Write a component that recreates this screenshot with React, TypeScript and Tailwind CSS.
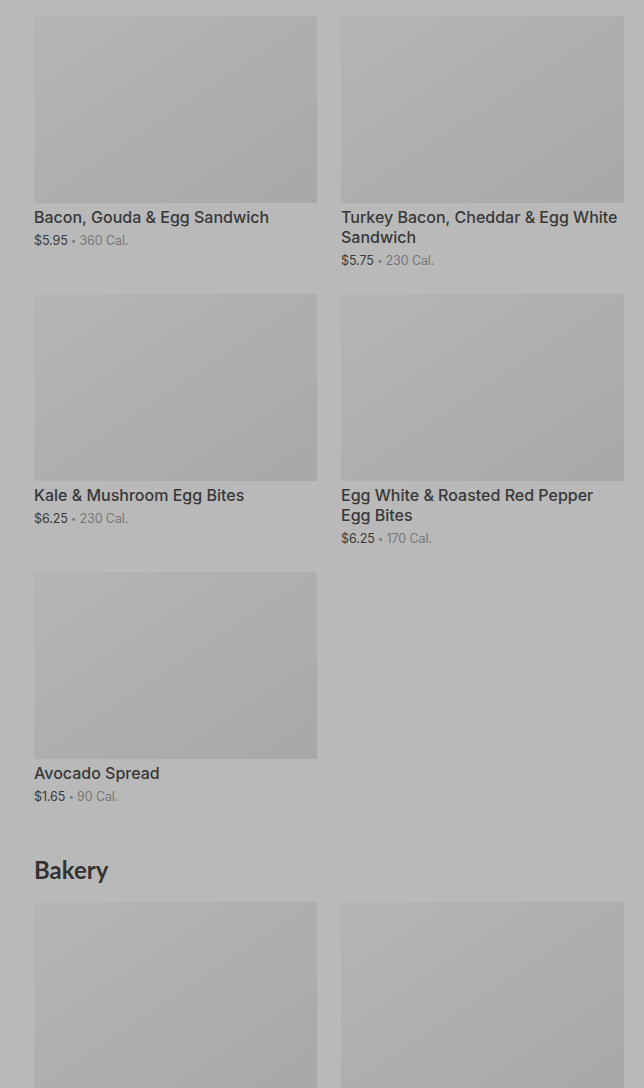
const items = [
  { name: "Bacon, Gouda & Egg Sandwich", price: "$5.95", cal: "360 Cal." },
  { name: "Turkey Bacon, Cheddar & Egg White Sandwich", price: "$5.75", cal: "230 Cal." },
  { name: "Kale & Mushroom Egg Bites", price: "$6.25", cal: "230 Cal." },
  { name: "Egg White & Roasted Red Pepper Egg Bites", price: "$6.25", cal: "170 Cal." },
  { name: "Avocado Spread", price: "$1.65", cal: "90 Cal." },
];

function Card({ item }: { item: { name: string; price: string; cal: string } }) {
  return (
    <div className="flex flex-col">
      <div className="h-[187px] w-full bg-gradient-to-br from-[#b5b5b5] to-[#a8a8a8]" />
      <p className="mt-1 text-[16px] leading-5 font-medium text-[#383838]">{item.name}</p>
      <p className="mt-1 text-[12.5px] leading-5 tracking-[-0.1px] text-[#3a3a3a]">
        {item.price} <span className="text-[9px] align-[1px] text-[#777]">•</span>{" "}
        <span className="text-[#777]">{item.cal}</span>
      </p>
    </div>
  );
}

export default function App() {
  return (
    <div
      className="h-[1088px] w-[644px] bg-[#b9b9b9] pl-[34px] pr-[20px] pt-4 overflow-hidden"
      style={{ fontFamily: "Inter, 'Noto Sans', sans-serif" }}
    >
      <div className="grid grid-cols-2 gap-x-6 gap-y-[23px]">
        {items.map((it) => (
          <Card key={it.name} item={it} />
        ))}
      </div>

      {/* Bakery */}
      <h2
        className="mt-[47px] mb-4 text-[24px] leading-8 font-bold text-[#333]"
        style={{ fontFamily: "Lato, 'Open Sans', sans-serif" }}
      >
        Bakery
      </h2>
      <div className="grid grid-cols-2 gap-x-6">
        <div className="h-[187px] bg-gradient-to-br from-[#b5b5b5] to-[#a8a8a8]" />
        <div className="h-[187px] bg-gradient-to-br from-[#b5b5b5] to-[#a8a8a8]" />
      </div>
    </div>
  );
}
